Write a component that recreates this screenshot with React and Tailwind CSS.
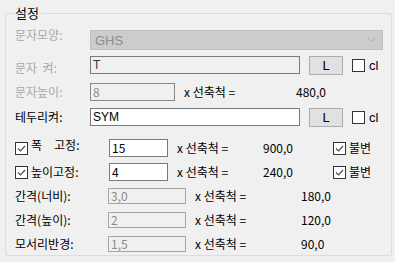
import React from "react";

function Check({ checked }) {
  return (
    <span className="w-[13px] h-[13px] border border-[#333333] bg-white flex items-center justify-center shrink-0">
      {checked && (
        <svg width="11" height="11" viewBox="0 0 11 11">
          <path d="M2 5.5 L4.5 8 L9 3" fill="none" stroke="#4d4d4d" strokeWidth="1.2" />
        </svg>
      )}
    </span>
  );
}

function LButton() {
  return (
    <div className="ml-[9px] w-[34px] h-[19px] bg-[#e1e1e1] border border-[#adadad] flex items-center justify-center text-[13px] font-['Liberation_Sans',sans-serif]">
      L
    </div>
  );
}

function Box({ w, h = "h-[18px]", bg = "bg-white", border = "border-[#7a7a7a]", color = "text-black", latin, children }) {
  return (
    <div className={`${w} ${h} ${bg} ${border} ${color} border flex items-center pl-[2px] leading-none ${latin ? "font-['Liberation_Sans',sans-serif] text-[12px]" : ""}`}>
      {children}
    </div>
  );
}

export default function App() {
  return (
    <div className="w-[395px] h-[262px] bg-[#f0f0f0] pt-[13px] px-[5px] text-[12px] text-black font-['Noto_Sans_CJK_KR',sans-serif] leading-none">
      {/* group box */}
      <div className="relative w-[387px] h-[243px] border border-[#dcdcdc] rounded-[2px] pl-[9px] pt-[14px]">
        <span className="absolute -top-[8px] left-[7px] px-[2px] bg-[#f0f0f0] text-[13px]">설정</span>

        {/* 문자모양 */}
        <div className="flex items-center h-[24px]">
          <span className="w-[75px] text-[#a8a8a8] -mt-[11px]">문자모양:</span>
          <div className="w-[293px] h-[20px] bg-[#cccccc] border border-[#bfbfbf] flex items-center justify-between pl-[4px] pr-[6px] text-[#8c8c8c] text-[13px] font-['Liberation_Sans',sans-serif]">
            GHS
            <svg width="9" height="6" viewBox="0 0 9 6">
              <path d="M0.5 0.5 L4.5 4.5 L8.5 0.5" fill="none" stroke="#a8a8a8" strokeWidth="1" />
            </svg>
          </div>
        </div>

        {/* 문자 켜 */}
        <div className="flex items-center h-[24px] mt-[1px]">
          <span className="w-[75px] text-[#a8a8a8] whitespace-pre mt-[5px]">문자  켜:</span>
          <Box w="w-[210px]" bg="bg-[#f0f0f0]" color="text-[#333333]" latin>T</Box>
          <LButton />
          <span className="ml-[9px]"><Check /></span>
          <span className="ml-[4px] font-['Liberation_Sans',sans-serif] text-[13px]">cl</span>
        </div>

        {/* 문자높이 */}
        <div className="flex items-center h-[24px] mt-[3px]">
          <span className="w-[75px] text-[#a8a8a8]">문자높이:</span>
          <Box w="w-[85px]" bg="bg-[#f0f0f0]" border="border-[#8a8a8a]" color="text-[#8c8c8c]">8</Box>
          <span className="ml-[9px] w-[112px]">x 선축척 =</span>
          <span>480,0</span>
        </div>

        {/* 테두리켜 */}
        <div className="flex items-center h-[24px] mt-[1px]">
          <span className="w-[75px]">테두리켜:</span>
          <Box w="w-[210px]" latin>SYM</Box>
          <LButton />
          <span className="ml-[9px]"><Check /></span>
          <span className="ml-[4px] font-['Liberation_Sans',sans-serif] text-[13px]">cl</span>
        </div>

        {/* 폭 고정 */}
        <div className="flex items-center h-[24px] mt-[7px]">
          <Check checked />
          <span className="ml-[3px] w-[78px] -mt-[6px]">
            폭<span className="ml-[12px]">고정:</span>
          </span>
          <Box w="w-[59px]">15</Box>
          <span className="ml-[9px] w-[86px]">x 선축척 =</span>
          <span className="w-[70px]">900,0</span>
          <Check checked />
          <span className="ml-[3px]">불변</span>
        </div>

        {/* 높이고정 */}
        <div className="flex items-center h-[24px]">
          <Check checked />
          <span className="ml-[3px] w-[78px]">높이고정:</span>
          <Box w="w-[59px]">4</Box>
          <span className="ml-[9px] w-[86px]">x 선축척 =</span>
          <span className="w-[70px]">240,0</span>
          <Check checked />
          <span className="ml-[3px]">불변</span>
        </div>

        {[
          ["간격(너비):", "3,0", "180,0"],
          ["간격(높이):", "2", "120,0"],
          ["모서리반경:", "1,5", "90,0"],
        ].map(([label, val, res]) => (
          <div key={label} className="flex items-center h-[24px]">
            <span className="w-[93px]">{label}</span>
            <Box w="w-[78px]" h="h-[16px]" bg="bg-[#f0f0f0]" border="border-[#a5a5a5]" color="text-[#8c8c8c]">{val}</Box>
            <span className="ml-[9px] w-[106px]">x 선축척 =</span>
            <span>{res}</span>
          </div>
        ))}
      </div>
    </div>
  );
}
